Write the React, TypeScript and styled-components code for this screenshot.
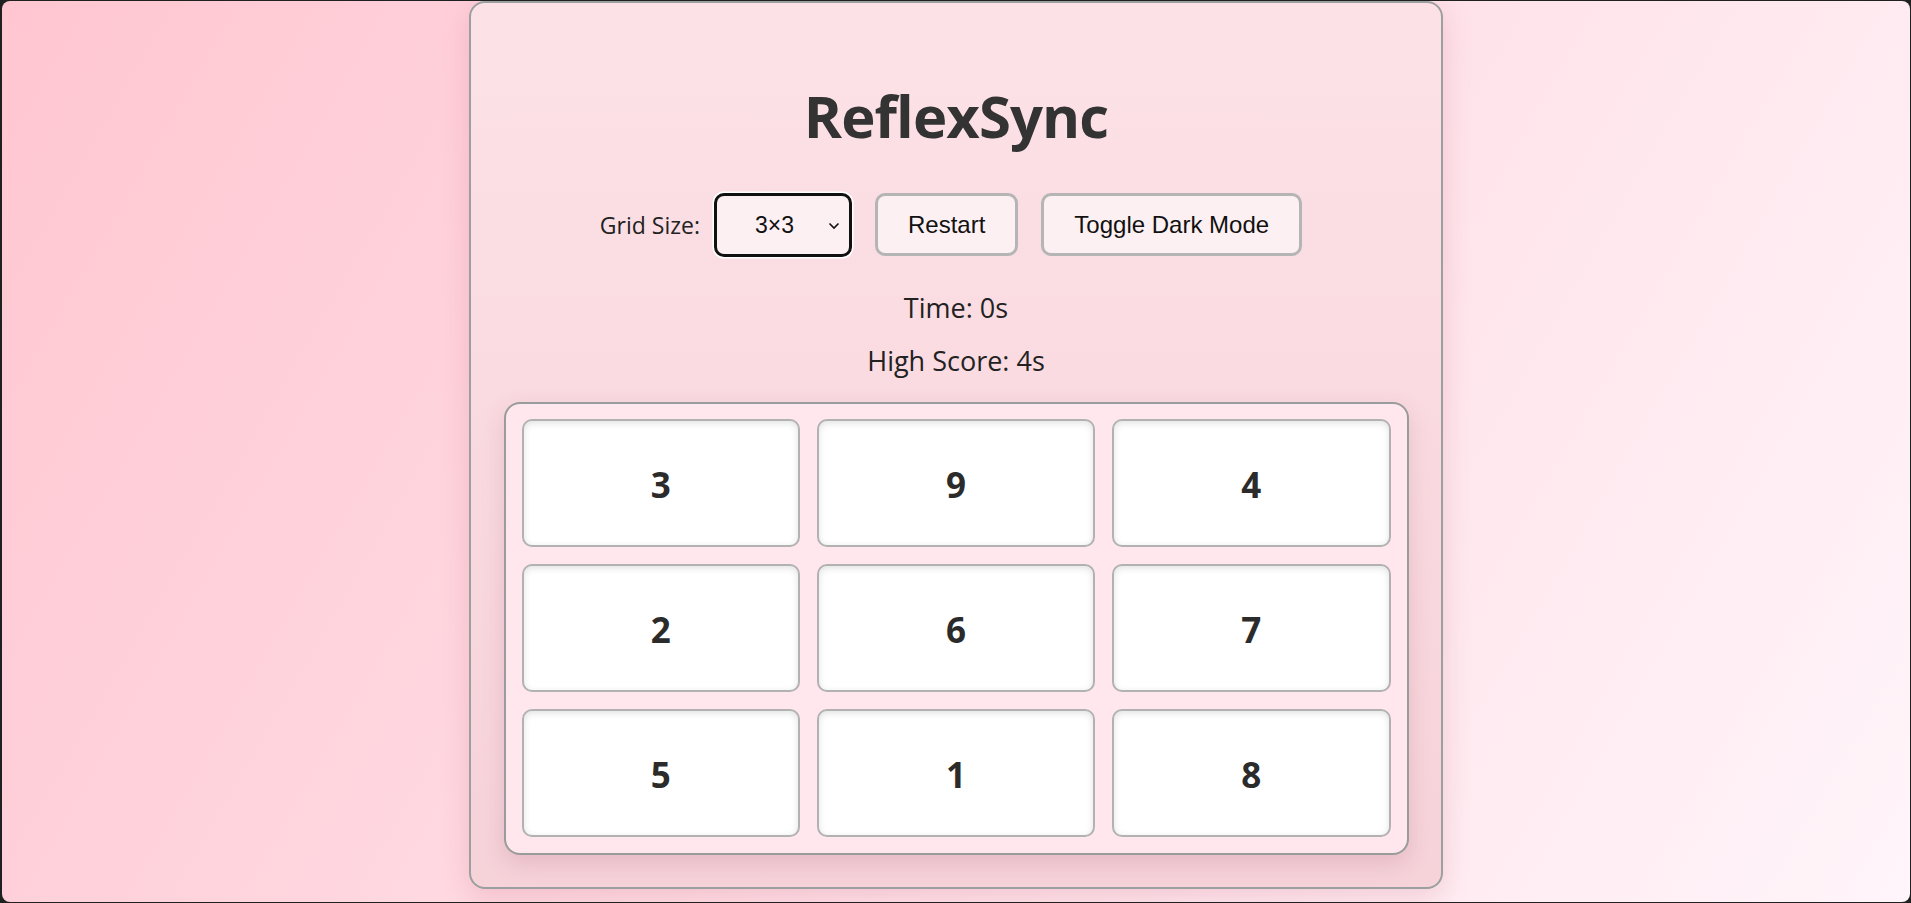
import React, { useState } from "react";
import styled, { createGlobalStyle } from "styled-components";

const GlobalStyle = createGlobalStyle`
  html, body {
    margin: 0;
    padding: 0;
    background: #1f2121;
    height: 100%;
    overflow: hidden;
  }
  #root { height: 100%; }
  * { box-sizing: border-box; }
`;

const Frame = styled.div`
  height: calc(100vh - 2px);
  margin: 1px 1px 1px 2px;
  border-radius: 8px;
  overflow: hidden;
  background: linear-gradient(120deg, #ffc6d1 0%, #ffdbe3 45%, #fff5fa 100%);
  display: flex;
  justify-content: center;
  align-items: flex-start;
  font-family: "Open Sans", "Noto Sans", sans-serif;
`;

const Card = styled.main`
  width: 974px;
  border: 2px solid #9c9f9f;
  border-radius: 16px;
  background: linear-gradient(180deg, #fce2e7 0%, #f9d9df 55%, #f6d2d9 100%);
  box-shadow: 0 8px 28px rgba(190, 90, 120, 0.22);
  padding: 32px 32px 32px;
  display: flex;
  flex-direction: column;
  align-items: center;
`;

const Title = styled.h1`
  margin: 46px 0 42px;
  font-size: 58px;
  line-height: 1.2;
  font-weight: 700;
  letter-spacing: -0.9px;
  color: #333333;
`;

const Controls = styled.div`
  display: flex;
  align-items: center;
  gap: 23px;
  height: 64px;
  padding-right: 10px;
`;

const Label = styled.label`
  display: flex;
  align-items: center;
  gap: 14px;
  font-size: 23px;
  color: #222222;
`;

const SelectWrap = styled.span`
  position: relative;
  display: inline-flex;
`;

const Select = styled.select`
  appearance: none;
  -webkit-appearance: none;
  width: 138px;
  height: 64px;
  padding: 0 0 0 38px;
  border: 3px solid #111111;
  border-radius: 10px;
  box-shadow: 0 0 0 1.5px #ffffff;
  background: #fdf0f3;
  font-family: "Liberation Sans", Arial, sans-serif;
  font-size: 23px;
  color: #111111;
  outline: none;
`;

const Chevron = styled.svg`
  position: absolute;
  right: 12px;
  top: 50%;
  width: 12px;
  height: 8px;
  margin-top: -3px;
  pointer-events: none;
`;

const Button = styled.button`
  height: 63px;
  padding: 0 30px;
  border: 3px solid #b5b5b5;
  border-radius: 10px;
  background: #fdf0f3;
  font-family: "Liberation Sans", Arial, sans-serif;
  font-size: 24px;
  color: #111111;
  cursor: pointer;
`;

const Stat = styled.p<{ $gap: number }>`
  margin: ${(p) => p.$gap}px 0 0;
  font-size: 27px;
  line-height: 42px;
  color: #222222;
`;

const Board = styled.div`
  margin-top: 20px;
  width: 905px;
  border: 2px solid #999c9c;
  border-radius: 16px;
  background: #ffe7ed;
  box-shadow: 0 8px 22px rgba(150, 70, 95, 0.18);
  padding: 15px 16px 16px;
  display: grid;
  grid-template-columns: repeat(3, 1fr);
  gap: 17px 17px;
`;

const Tile = styled.button`
  height: 128px;
  padding-top: 4px;
  border: 2px solid #b2b2b2;
  border-radius: 10px;
  background: #ffffff;
  box-shadow: inset 0 2px 7px rgba(0, 0, 0, 0.12);
  font-family: "Open Sans", "Noto Sans", sans-serif;
  font-weight: 700;
  font-size: 35px;
  color: #2b2b2b;
  cursor: pointer;
`;

const numbers = [3, 9, 4, 2, 6, 7, 5, 1, 8];

export default function App() {
  const [size, setSize] = useState("3");
  return (
    <>
      <GlobalStyle />
      <Frame>
        <Card>
          <Title>ReflexSync</Title>
          <Controls>
            <Label>
              Grid Size:
              <SelectWrap>
                <Select value={size} onChange={(e) => setSize(e.target.value)}>
                  <option value="3">3×3</option>
                  <option value="4">4×4</option>
                  <option value="5">5×5</option>
                </Select>
                <Chevron viewBox="0 0 12 8">
                  <path d="M1.5 1.5 L6 6 L10.5 1.5" fill="none" stroke="#111" strokeWidth="1.6" />
                </Chevron>
              </SelectWrap>
            </Label>
            <Button>Restart</Button>
            <Button>Toggle Dark Mode</Button>
          </Controls>
          <Stat $gap={30}>Time: 0s</Stat>
          <Stat $gap={11}>High Score: 4s</Stat>
          <Board>
            {numbers.map((n) => (
              <Tile key={n}>{n}</Tile>
            ))}
          </Board>
        </Card>
      </Frame>
    </>
  );
}
